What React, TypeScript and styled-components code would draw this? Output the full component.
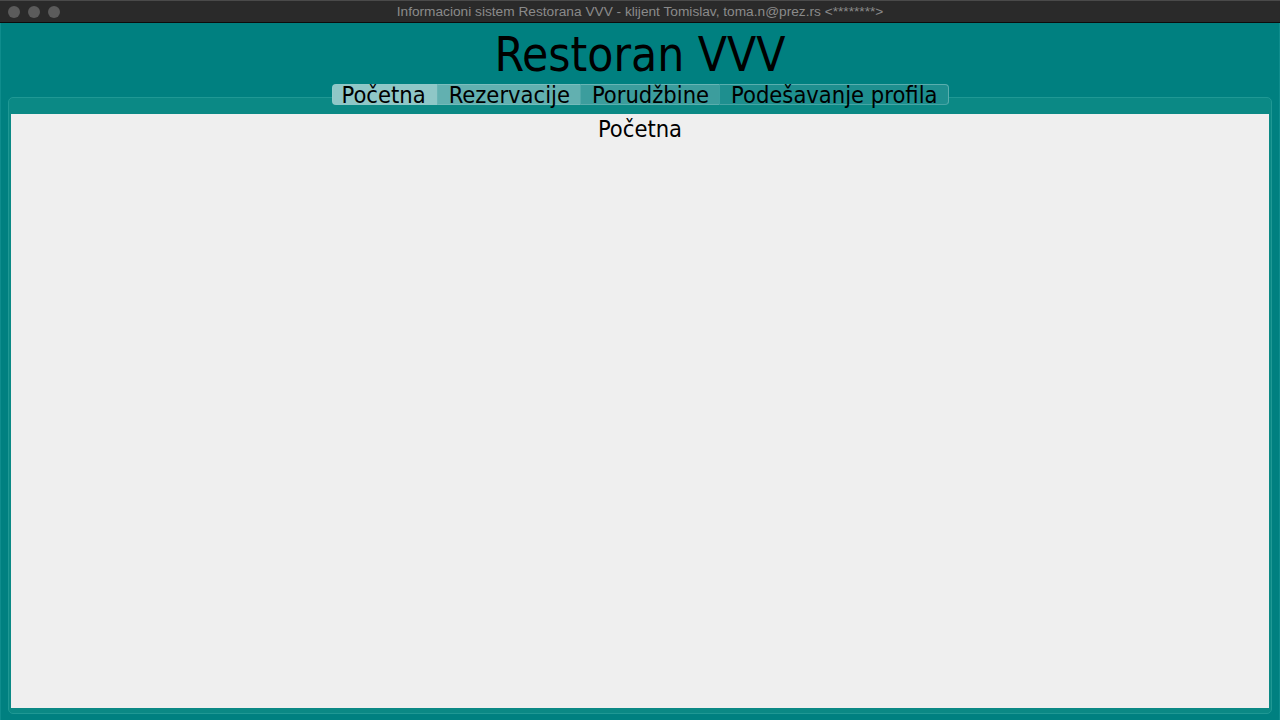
import React, { useState } from "react";
import styled, { createGlobalStyle } from "styled-components";

const Global = createGlobalStyle`
  html, body { margin: 0; padding: 0; background: #008080; }
  #root { width: 1280px; height: 720px; overflow: hidden; }
`;

const Window = styled.div`
  width: 1280px;
  height: 720px;
  display: flex;
  flex-direction: column;
  background: #008080;
  font-family: "DejaVu Sans Condensed", "DejaVu Sans", sans-serif;
`;

const TitleBar = styled.div`
  flex: none;
  display: flex;
  align-items: center;
  position: relative;
  background: #2a2a2a;
  border-top: 1px solid #4a4a4a;
  border-bottom: 1px solid #0c0c0c;
  box-sizing: border-box;
  height: 23px;
`;

const Lights = styled.div`
  display: flex;
  gap: 8px;
  padding-left: 8px;
`;

const Light = styled.span`
  width: 12px;
  height: 12px;
  border-radius: 50%;
  background: #5b5b5b;
`;

const TitleText = styled.div`
  position: absolute;
  left: 0;
  right: 0;
  text-align: center;
  font-family: "Liberation Sans", Arial, sans-serif;
  font-size: 13.7px;
  color: #8a8a8a;
  pointer-events: none;
`;

const Body = styled.div`
  flex: 1;
  display: flex;
  flex-direction: column;
  align-items: center;
  padding: 0 7px 6px;
  border-left: 1px solid #0f8d8d;
  border-right: 1px solid #0f8d8d;
`;

const Heading = styled.h1`
  margin: 0;
  height: 61px;
  font-weight: normal;
  font-size: 47.5px;
  line-height: 59px;
  padding-top: 2px;
  box-sizing: border-box;
  color: #000;
`;

const TabBar = styled.div`
  display: flex;
  height: 21px;
  margin-bottom: -8px;
  position: relative;
  z-index: 1;
`;

const Tab = styled.button<{ $bg: string }>`
  all: unset;
  cursor: pointer;
  box-sizing: border-box;
  background: ${(p) => p.$bg};
  font-family: "DejaVu Sans Condensed", "DejaVu Sans", sans-serif;
  font-size: 23.5px;
  line-height: 21px;
  height: 21px;
  padding: 0 10px 0 11px;
  color: #000;
  white-space: nowrap;
  border-top: 1px solid rgba(150, 205, 205, 0.5);
  border-bottom: 1px solid rgba(150, 205, 205, 0.35);
  &:first-child {
    padding: 0 11px 0 9px;
    border-left: 1px solid rgba(150, 205, 205, 0.6);
    border-radius: 4px 0 0 4px;
  }
  &:last-child {
    border-right: 1px solid rgba(150, 205, 205, 0.5);
    border-radius: 0 4px 4px 0;
  }
  & + & {
    border-left: 1px solid rgba(120, 190, 190, 0.35);
  }
`;

const Panel = styled.div`
  align-self: stretch;
  flex: 1;
  display: flex;
  flex-direction: column;
  background: #0b8985;
  border: 1px solid #1f9894;
  border-radius: 5px;
  padding: 16px 2px 5px;
`;

const Content = styled.div`
  flex: 1;
  background: #efefef;
  display: flex;
  flex-direction: column;
  align-items: center;
`;

const PageTitle = styled.div`
  font-size: 23.5px;
  line-height: 30px;
  color: #000;
`;

const tabs = [
  { label: "Početna", bg: "#8fc7c7" },
  { label: "Rezervacije", bg: "#62b0b0" },
  { label: "Porudžbine", bg: "#3c9d9d" },
  { label: "Podešavanje profila", bg: "#1e8f8f" },
];

export default function App() {
  const [active, setActive] = useState(0);
  return (
    <>
      <Global />
      <Window>
        <TitleBar>
          <Lights>
            <Light />
            <Light />
            <Light />
          </Lights>
          <TitleText>
            Informacioni sistem Restorana VVV - klijent Tomislav, toma.n@prez.rs &lt;********&gt;
          </TitleText>
        </TitleBar>
        <Body>
          <Heading>Restoran VVV</Heading>
          <TabBar>
            {tabs.map((t, i) => (
              <Tab key={t.label} $bg={t.bg} onClick={() => setActive(i)}>
                {t.label}
              </Tab>
            ))}
          </TabBar>
          <Panel>
            <Content>
              <PageTitle>{tabs[active].label}</PageTitle>
            </Content>
          </Panel>
        </Body>
      </Window>
    </>
  );
}
